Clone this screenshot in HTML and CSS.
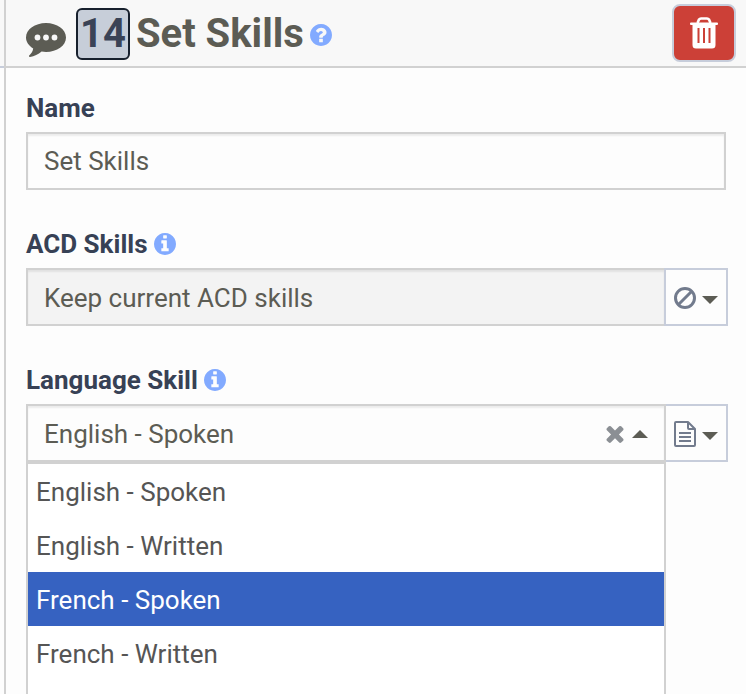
FILE: index.html
```html
<!DOCTYPE html>
<html lang="en">
<head>
<meta charset="utf-8">
<meta name="viewport" content="width=device-width, initial-scale=1">
<title>Set Skills</title>
<link rel="stylesheet" href="styles.css">
</head>
<body>
<svg class="sprite" aria-hidden="true">
  <symbol id="info" viewBox="128 128 1536 1536"><path d="M1152 1376v-160q0-14-9-23t-23-9h-96v-512q0-14-9-23t-23-9h-320q-14 0-23 9t-9 23v160q0 14 9 23t23 9h96v320h-96q-14 0-23 9t-9 23v160q0 14 9 23t23 9h448q14 0 23-9t9-23zm-128-896v-160q0-14-9-23t-23-9h-192q-14 0-23 9t-9 23v160q0 14 9 23t23 9h192q14 0 23-9t9-23zm640 416q0 209-103 385.5t-279.5 279.5-385.5 103-385.5-103-279.5-279.5-103-385.5 103-385.5 279.5-279.5 385.5-103 385.5 103 279.5 279.5 103 385.5z"/></symbol>
</svg>
<div class="shell">
  <div class="rail"><div class="rail-head"></div></div>
  <main class="panel">
    <header class="header">
      <svg class="icon-comment" viewBox="0 0 40 34" aria-hidden="true">
        <path d="M20 0C31 0 40 6.400 40 14.500S31 29 20 29c-1.500 0-3-.1-4.400-.4C12.300 31.500 8.300 33.300 4 34c-1 .1-1.500-.9-.8-1.600 2-2 3.500-3.600 4-6.900C3 23 0 19 0 14.500 0 6.400 9 0 20 0z"/>
        <g class="dots"><circle cx="11.500" cy="14.500" r="2.900"/><circle cx="20" cy="14.500" r="2.900"/><circle cx="28.500" cy="14.500" r="2.900"/></g>
      </svg>
      <h1 class="title"><span class="badge">14</span>Set Skills</h1>
      <a class="help" href="#" aria-label="Help"><svg class="icon-round" viewBox="128 128 1536 1536" aria-hidden="true"><path d="M1024 1376v-192q0-14-9-23t-23-9h-192q-14 0-23 9t-9 23v192q0 14 9 23t23 9h192q14 0 23-9t9-23zm256-672q0-88-55.500-163t-138.500-116-170-41q-243 0-371 213-15 24 8 42l132 100q7 6 19 6 16 0 25-12 53-68 86-92 34-24 86-24 48 0 85.500 26t37.500 59q0 38-20 61t-68 45q-63 28-115.500 86.500t-52.500 125.500v36q0 14 9 23t23 9h192q14 0 23-9t9-23q0-19 21.500-49.500t54.500-49.500q32-18 49-28.500t46-35 44.500-48 28-60.500 12.500-81zm384 192q0 209-103 385.500t-279.500 279.500-385.500 103-385.500-103-279.500-279.500-103-385.500 103-385.500 279.500-279.500 385.500-103 385.500 103 279.500 279.500 103 385.500z"/></svg></a>
      <button class="delete" type="button" aria-label="Delete">
        <svg class="icon-trash" viewBox="0 0 28 32" aria-hidden="true">
          <path d="M7.500 6 9 2.500Q9.700 1.500 11 1.500h6q1.300 0 2 1L20.500 6" fill="none" stroke="#fff" stroke-width="2.600"/>
          <path d="M1 5.500h26q1 0 1 1V7q0 1-1 1h-1.500v20q0 3.500-3.500 3.500H6q-3.500 0-3.500-3.500V8H1Q0 8 0 7v-.5q0-1 1-1z" fill="#fff"/>
          <path d="M7.500 11h2v15h-2zM13 11h2v15h-2zM18.500 11h2v15h-2z" fill="#cc4037"/>
        </svg>
      </button>
    </header>
    <form class="form">
      <div class="field">
        <div class="caption"><label for="name">Name</label></div>
        <div class="row row-plain"><input class="control" id="name" type="text" value="Set Skills"></div>
      </div>
      <div class="field">
        <div class="caption"><label for="acd">ACD Skills</label><svg class="icon-round" aria-hidden="true"><use href="#info"/></svg></div>
        <div class="row">
          <input class="control control-muted" id="acd" type="text" value="Keep current ACD skills" readonly>
          <button class="addon" type="button" aria-label="ACD skills mode">
            <svg class="icon-mode" viewBox="0 0 24 28" aria-hidden="true"><circle cx="12" cy="14" r="9.500" fill="none" stroke="#727b8d" stroke-width="3"/><path d="M5.500 20.500l13-13" stroke="#727b8d" stroke-width="3"/></svg>
            <span class="caret"></span>
          </button>
        </div>
      </div>
      <div class="field">
        <div class="caption"><label for="language">Language Skill</label><svg class="icon-round" aria-hidden="true"><use href="#info"/></svg></div>
        <div class="row">
          <div class="combo">
            <input class="combo-input" id="language" type="text" role="combobox" aria-expanded="true" aria-controls="languages" value="English - Spoken">
            <button class="bare" type="button" aria-label="Clear"><svg class="icon-clear" viewBox="302 302 1188 1252" aria-hidden="true"><path d="M1490 1322q0 40-28 68l-136 136q-28 28-68 28t-68-28l-294-294-294 294q-28 28-68 28t-68-28l-136-136q-28-28-28-68t28-68l294-294-294-294q-28-28-28-68t28-68l136-136q28-28 68-28t68 28l294 294 294-294q28-28 68-28t68 28l136 136q28 28 28 68t-28 68l-294 294 294 294q28 28 28 68z"/></svg></button>
            <button class="bare" type="button" aria-label="Close list"><span class="caret caret-up"></span></button>
            <ul class="options" id="languages" role="listbox" aria-label="Language Skill">
              <li class="option" role="option">English - Spoken</li>
              <li class="option" role="option">English - Written</li>
              <li class="option option-active" role="option" aria-selected="true">French - Spoken</li>
              <li class="option" role="option">French - Written</li>
            </ul>
          </div>
          <button class="addon" type="button" aria-label="Language skill mode">
            <svg class="icon-mode" viewBox="0 0 24 28" aria-hidden="true"><g fill="none" stroke="#727b8d" stroke-width="2" stroke-linejoin="round"><path d="M3 2h12l7 7v16q0 1-1 1H3q-1 0-1-1V3q0-1 1-1z"/><path d="M15 2v6q0 1 1 1h6M6 13h12M6 17h12M6 21h12"/></g></svg>
            <span class="caret"></span>
          </button>
        </div>
      </div>
    </form>
  </main>
</div>
</body>
</html>
```
FILE: styles.css
```css
* {
  box-sizing: border-box;
}

body {
  margin: 0;
  overflow: hidden;
  background: #fdfdfd;
  color: #5c5c54;
  font-family: Roboto, "Liberation Sans", sans-serif;
  font-size: 26px;
}

.sprite {
  position: absolute;
  width: 0;
  height: 0;
}

.shell {
  display: flex;
  min-height: 100vh;
}

.rail {
  width: 4px;
}

.rail-head {
  height: 68px;
  border-bottom: 2px solid #c7cddb;
  background: #f8f8f8;
}

.panel {
  flex: 1;
  min-width: 0;
  border-left: 2px solid #d1d1d1;
}

.header {
  display: flex;
  align-items: center;
  height: 68px;
  padding: 0 10px 0 20px;
  border-bottom: 2px solid #d1d1d1;
  background: #f8f8f8;
}

.icon-comment {
  width: 40px;
  height: 34px;
  margin: 14px 10px 0 0;
  fill: #5c5c54;
}

.dots {
  fill: #f8f8f8;
}

.title {
  display: flex;
  align-items: center;
  gap: 6px;
  margin: 2px 0 0;
  font-size: 40px;
  font-weight: 700;
  line-height: 48px;
  white-space: nowrap;
}

.badge {
  padding: 0 2px;
  border: 2px solid #17202d;
  border-radius: 6px;
  background: #c7ced9;
  color: #3a4356;
}

.help {
  display: flex;
  margin: 4px 0 0 6px;
}

.icon-round {
  width: 22px;
  height: 22px;
  fill: #82aaff;
}

.delete {
  display: flex;
  align-items: center;
  justify-content: center;
  width: 64px;
  height: 58px;
  margin-left: auto;
  padding: 0;
  border: 2px solid #c7cddb;
  border-radius: 8px;
  background: #cc4037;
}

.icon-trash {
  width: 28px;
  height: 32px;
}

.form {
  display: grid;
  gap: 38px;
  padding: 24px 18px 0 20px;
}

.caption {
  display: flex;
  align-items: center;
  gap: 6px;
  height: 32px;
  margin-bottom: 8px;
  color: #374155;
  font-weight: 700;
}

.row {
  display: flex;
  height: 58px;
}

.row-plain {
  padding-right: 2px;
}

.control,
.combo {
  flex: 1;
  min-width: 0;
  border: 2px solid #d1d1d1;
  border-radius: 0;
  background: #fdfdfd;
  box-shadow: inset 0 2px 2px rgba(0, 0, 0, 0.07);
  color: inherit;
  font: inherit;
  outline: none;
}

.control {
  padding: 0 16px;
}

.control-muted {
  padding-top: 2px;
  background: #f3f3f3;
}

.addon {
  display: flex;
  align-items: center;
  justify-content: space-between;
  width: 64px;
  margin-left: -2px;
  padding: 2px 8px 0 7px;
  border: 2px solid #c7cddb;
  background: #fdfdfd;
}

.icon-mode {
  width: 24px;
  height: 28px;
}

.caret {
  width: 16px;
  margin-top: 4px;
  border: 8px solid transparent;
  border-top-color: #5c5c54;
  border-bottom: 0;
}

.caret-up {
  margin: 0;
  border-top: 0;
  border-bottom: 8px solid #5c5c54;
}

.combo {
  position: relative;
  z-index: 1;
  display: flex;
  align-items: center;
  gap: 8px;
  padding: 0 16px;
}

.combo-input {
  flex: 1;
  min-width: 0;
  padding: 2px 0 0;
  border: 0;
  background: transparent;
  color: inherit;
  font: inherit;
  outline: none;
}

.bare {
  display: flex;
  align-items: center;
  padding: 2px 0 0;
  border: 0;
  background: none;
}

.icon-clear {
  width: 18px;
  height: 18px;
  fill: #8b8f94;
}

.options {
  position: absolute;
  top: calc(100% + 2px);
  left: -2px;
  right: -2px;
  min-height: 232px;
  margin: 0;
  padding: 0;
  border: 2px solid #d1d1d1;
  border-bottom: 0;
  background: #fff;
  color: #555;
  list-style: none;
}

.option {
  padding: 2px 8px 0;
  line-height: 52px;
}

.option-active {
  background: #3662c1;
  color: #fff;
}
```
